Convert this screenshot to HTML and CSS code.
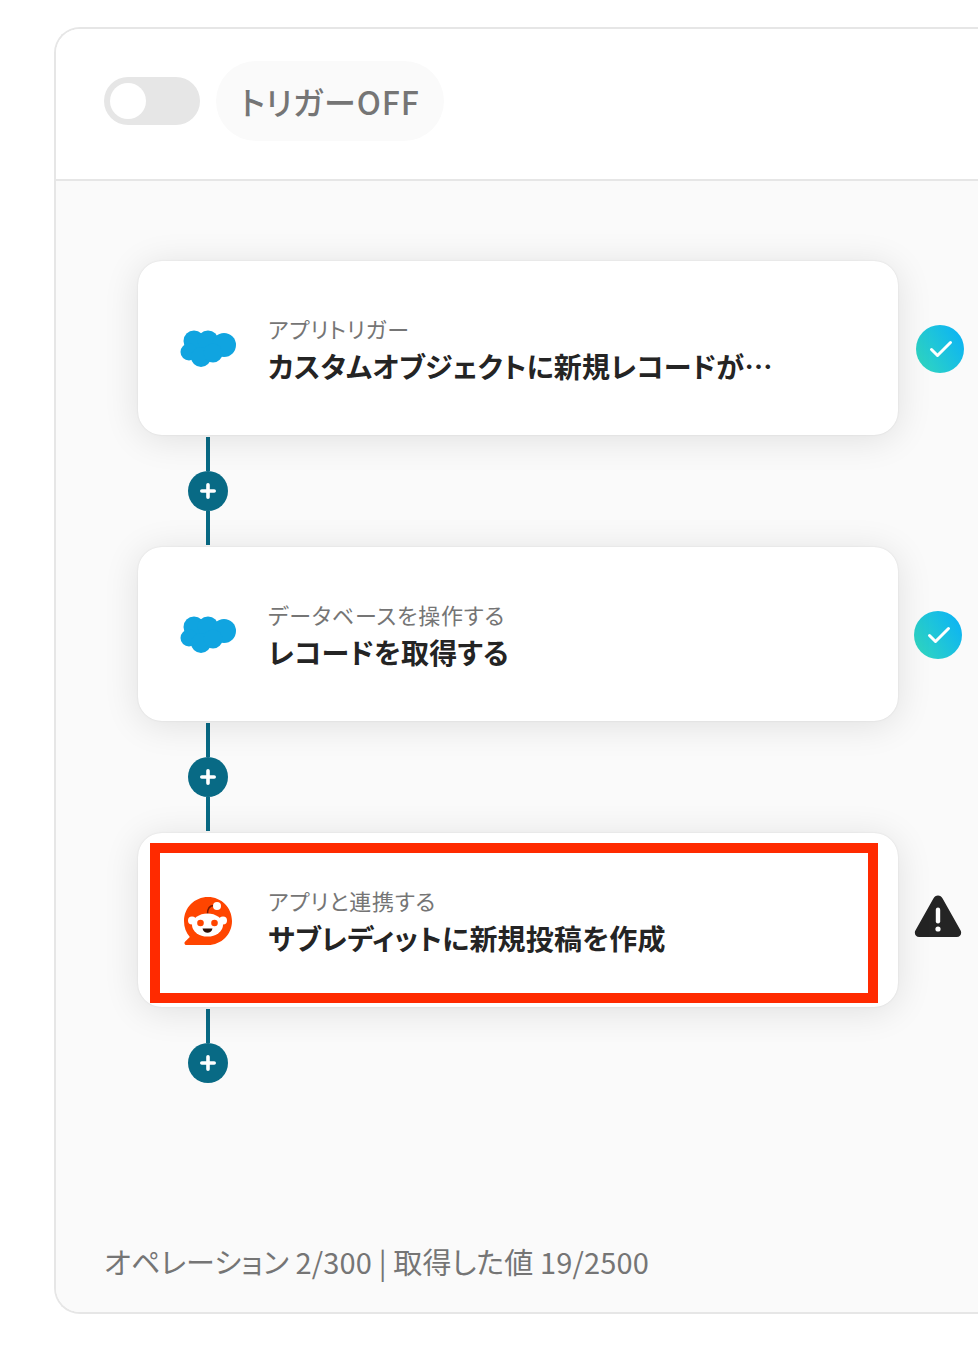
FILE: index.html
```html
<!DOCTYPE html>
<html lang="ja">
<head>
    <meta charset="UTF-8">
    <title>トリガーOFF</title>
    <link rel="stylesheet" href="styles.css">
</head>
<body>
    <div class="panel">
        <div class="panel-head">
            <div class="toggle"><span class="knob"></span></div>
            <div class="trigger-label">トリガーOFF</div>
        </div>
        <div class="panel-body">
            <div class="step">
                <div class="card">
                    <svg class="app-icon" viewBox="0 0 56 40"><use href="#cloud"></use></svg>
                    <div class="card-text">
                        <div class="card-sub">アプリトリガー</div>
                        <div class="card-title">カスタムオブジェクトに新規レコードが…</div>
                    </div>
                </div>
                <svg class="status status-first" viewBox="0 0 48 48"><use href="#check"></use></svg>
            </div>
            <div class="connector">
                <span class="line"></span>
                <span class="add"><svg viewBox="0 0 16 16"><path d="M8 1.800v12.400M1.800 8h12.400"></path></svg></span>
                <span class="line"></span>
            </div>
            <div class="step">
                <div class="card">
                    <svg class="app-icon" viewBox="0 0 56 40"><use href="#cloud"></use></svg>
                    <div class="card-text">
                        <div class="card-sub">データベースを操作する</div>
                        <div class="card-title">レコードを取得する</div>
                    </div>
                </div>
                <svg class="status" viewBox="0 0 48 48"><use href="#check"></use></svg>
            </div>
            <div class="connector">
                <span class="line"></span>
                <span class="add"><svg viewBox="0 0 16 16"><path d="M8 1.800v12.400M1.800 8h12.400"></path></svg></span>
                <span class="line"></span>
            </div>
            <div class="step">
                <div class="card">
                    <svg class="app-icon reddit" viewBox="0 0 50 50">
                        <path class="rd-bubble" d="M25 1C38.500 1 49 11.700 49 25S38.500 49 25 49H3.500C1.600 49 .8 46.800 2.200 45.500L6.800 41C3 36.800 1 31.200 1 25 1 11.700 11.500 1 25 1Z"></path>
                        <path class="rd-stalk" d="M24.500 18C24.500 13 26 9.500 31 9.500" fill="none"></path>
                        <circle class="rd-face" cx="34" cy="10" r="4"></circle>
                        <circle class="rd-face" cx="9" cy="24.500" r="4"></circle>
                        <circle class="rd-face" cx="40" cy="24.500" r="4"></circle>
                        <ellipse class="rd-face" cx="24.500" cy="29" rx="15.500" ry="11.500"></ellipse>
                        <circle class="rd-eye" cx="17.500" cy="27" r="3.300"></circle>
                        <circle class="rd-eye" cx="31.500" cy="27" r="3.300"></circle>
                        <path class="rd-mouth" d="M19.500 32.500H29.500C28.800 35.500 26.800 36.800 24.500 36.800S20.200 35.500 19.500 32.500Z"></path>
                    </svg>
                    <div class="card-text">
                        <div class="card-sub">アプリと連携する</div>
                        <div class="card-title">サブレディットに新規投稿を作成</div>
                    </div>
                    <div class="highlight"></div>
                </div>
                <svg class="status status-warn" viewBox="0 0 48 48">
                    <path class="warn-bg" d="M24 3.500C26 3.500 27.600 4.600 28.600 6.400L46.600 38.500C48.200 41.500 46.200 45 42.800 45H5.200C1.800 45 -.2 41.500 1.400 38.500L19.400 6.400C20.400 4.600 22 3.500 24 3.500Z"></path>
                    <rect class="warn-mark" x="21.800" y="15.500" width="4.400" height="16" rx="2.200"></rect>
                    <circle class="warn-mark" cx="24" cy="37" r="2.600"></circle>
                </svg>
            </div>
            <div class="connector">
                <span class="line"></span>
                <span class="add"><svg viewBox="0 0 16 16"><path d="M8 1.800v12.400M1.800 8h12.400"></path></svg></span>
            </div>
            <div class="usage">オペレーション 2/300 | 取得した値 19/2500</div>
        </div>
    </div>

    <svg class="defs" width="0" height="0">
        <defs>
            <linearGradient id="check-grad" x1="0" y1="1" x2="1" y2="0.4">
                <stop offset="0" stop-color="#33d9bb"></stop>
                <stop offset="1" stop-color="#0fb6f0"></stop>
            </linearGradient>
            <g id="cloud" fill="#10a4e0">
                <circle cx="14" cy="13" r="10.500"></circle>
                <circle cx="28" cy="13" r="10.500"></circle>
                <circle cx="44" cy="17" r="12"></circle>
                <circle cx="9" cy="24" r="8.500"></circle>
                <circle cx="21" cy="29" r="10"></circle>
                <circle cx="33" cy="25" r="9.500"></circle>
            </g>
            <g id="check">
                <circle cx="24" cy="24" r="24" fill="url(#check-grad)"></circle>
                <path d="M15.500 24.500l6 6L34.500 17.500" fill="none" stroke="#fff" stroke-width="3" stroke-linecap="round" stroke-linejoin="round"></path>
            </g>
        </defs>
    </svg>
</body>
</html>
```

FILE: styles.css
```css
html, body {
    margin: 0;
    height: 1372px;
    overflow: hidden;
    background-color: #fff;
}
body {
    font-family: "Noto Sans CJK JP", "Noto Sans", sans-serif;
    font-feature-settings: "palt";
    padding: 27px 0 0 54px;
    box-sizing: border-box;
}
.defs {
    position: absolute;
}
.panel {
    width: 924px;
    height: 1287px;
    box-sizing: border-box;
    border: 2px solid #e6e6e6;
    border-right: 0;
    border-radius: 26px 0 0 26px;
    overflow: hidden;
    display: flex;
    flex-direction: column;
}
.panel-head {
    height: 152px;
    flex: none;
    box-sizing: border-box;
    border-bottom: 2px solid #e6e6e6;
    background-color: #fff;
    padding: 0 0 6px 48px;
    display: flex;
    align-items: center;
    gap: 16px;
}
.toggle {
    width: 96px;
    height: 48px;
    border-radius: 24px;
    background-color: #e6e6e6;
    display: flex;
    align-items: center;
    padding-left: 6px;
    box-sizing: border-box;
}
.knob {
    width: 36px;
    height: 36px;
    border-radius: 50%;
    background-color: #fff;
}
.trigger-label {
    width: 228px;
    height: 80px;
    border-radius: 40px;
    background-color: #fafafa;
    color: #757575;
    font-size: 32px;
    font-weight: 500;
    line-height: 80px;
    letter-spacing: 0.9px;
    text-align: center;
}
.panel-body {
    flex: 1;
    background-color: #fafafa;
    padding: 80px 0 0 82px;
    display: flex;
    flex-direction: column;
    position: relative;
}
.step {
    display: flex;
    align-items: center;
    gap: 16px;
}
.card {
    width: 760px;
    height: 174px;
    flex: none;
    box-sizing: border-box;
    background-color: #fff;
    border-radius: 24px;
    box-shadow: 0 0 2px rgba(0,0,0,0.1), 0 4px 36px rgba(0,0,0,0.11);
    padding-left: 42px;
    display: flex;
    align-items: center;
    position: relative;
}
.app-icon {
    width: 56px;
    height: 40px;
    flex: none;
}
.app-icon.reddit {
    width: 50px;
    height: 50px;
    margin: 2px 3px 0;
}
.card-text {
    margin-left: 32px;
    padding-top: 3px;
}
.card-sub {
    color: #757575;
    font-size: 22px;
    line-height: 32px;
    letter-spacing: 0.8px;
}
.card-title {
    color: #242424;
    font-size: 28px;
    font-weight: 700;
    line-height: 44px;
    letter-spacing: 0.2px;
}
.highlight {
    position: absolute;
    left: 12px;
    top: 10px;
    width: 728px;
    height: 160px;
    box-sizing: border-box;
    border: 10px solid #ff2a00;
}
.status {
    width: 48px;
    height: 48px;
    flex: none;
    margin-top: 2px;
}
.status-first {
    margin-left: 2px;
}
.status-warn {
    margin-top: 0;
    margin-bottom: 8px;
}
.warn-bg {
    fill: #242424;
}
.warn-mark {
    fill: #fff;
}
.connector {
    width: 40px;
    margin: 2px 0 2px 50px;
    display: flex;
    flex-direction: column;
    align-items: center;
}
.line {
    width: 4px;
    height: 34px;
    background-color: #086a85;
}
.add {
    width: 40px;
    height: 40px;
    border-radius: 50%;
    background-color: #086a85;
    display: flex;
    align-items: center;
    justify-content: center;
}
.add svg {
    width: 16px;
    height: 16px;
    fill: none;
    stroke: #fff;
    stroke-width: 3.6;
    stroke-linecap: round;
}
.rd-bubble {
    fill: #ff4500;
}
.rd-stalk {
    stroke: #7a1a00;
    stroke-width: 1.6;
}
.rd-face {
    fill: #fff;
}
.rd-eye {
    fill: #ff4500;
}
.rd-mouth {
    fill: #2a1008;
}
.usage {
    position: absolute;
    left: 48px;
    bottom: 31px;
    color: #757575;
    font-size: 29px;
    line-height: 40px;
    letter-spacing: 0.15px;
}
```
